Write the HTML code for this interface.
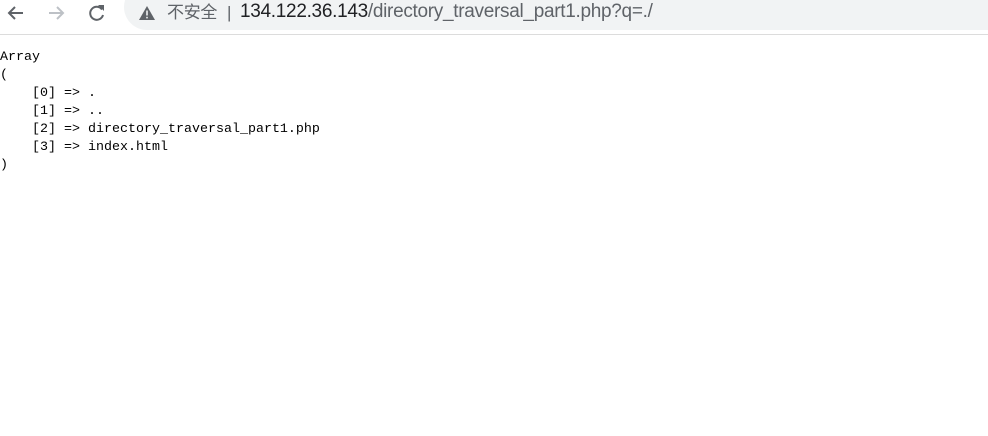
<!DOCTYPE html>
<html><head><meta charset="utf-8"><style>
html,body{margin:0;padding:0;width:988px;height:436px;background:#fff;overflow:hidden}
.bar{position:absolute;left:0;top:0;width:988px;height:34px;border-bottom:1px solid #dcdcdc;background:#fff}
.pill{position:absolute;left:124px;top:-16px;width:900px;height:46px;border-radius:23px;background:#f1f3f4}
.t{position:absolute;top:2px;font-family:"Liberation Sans","Noto Sans CJK SC",sans-serif;font-size:17px;line-height:22px;white-space:nowrap;letter-spacing:-0.3px}
.u{font-size:19px;top:1px}
pre{position:absolute;left:0;top:49px;margin:0;font-family:"Liberation Mono",monospace;font-size:13.33px;line-height:18px;color:#000}
</style></head><body>
<div class="bar">
<svg style="position:absolute;left:0;top:0" width="124" height="30">
<g fill="none" stroke="#5f6368" stroke-width="2">
<path d="M23 13H9M15 7l-6 6 6 6"/>
</g>
<g fill="none" stroke="#bdc1c6" stroke-width="2">
<path d="M49 13h14M57 7l6 6-6 6"/>
</g>
<g fill="none" stroke="#5f6368" stroke-width="2">
<path d="M102 9.5A6.5 6.5 0 1 0 103 15"/>
</g>
<path d="M98 5h6v6z" fill="#5f6368"/>
</svg>
<div class="pill"></div>
<svg style="position:absolute;left:138px;top:5px" width="18" height="16"><path d="M9 1L17 15H1z" fill="#5f6368"/><rect x="8.2" y="5.5" width="1.6" height="5" fill="#f1f3f4"/><rect x="8.2" y="11.8" width="1.6" height="1.6" fill="#f1f3f4"/></svg>
<div class="t" style="left:167px;color:#5f6368">不安全</div>
<div class="t" style="left:227px;color:#5f6368">|</div>
<div class="t u" style="left:240px;color:#202124">134.122.36.143<span style="color:#5f6368">/directory_traversal_part1.php?q=./</span></div>
</div>
<pre>Array
(
    [0] =&gt; .
    [1] =&gt; ..
    [2] =&gt; directory_traversal_part1.php
    [3] =&gt; index.html
)
</pre>
</body></html>
